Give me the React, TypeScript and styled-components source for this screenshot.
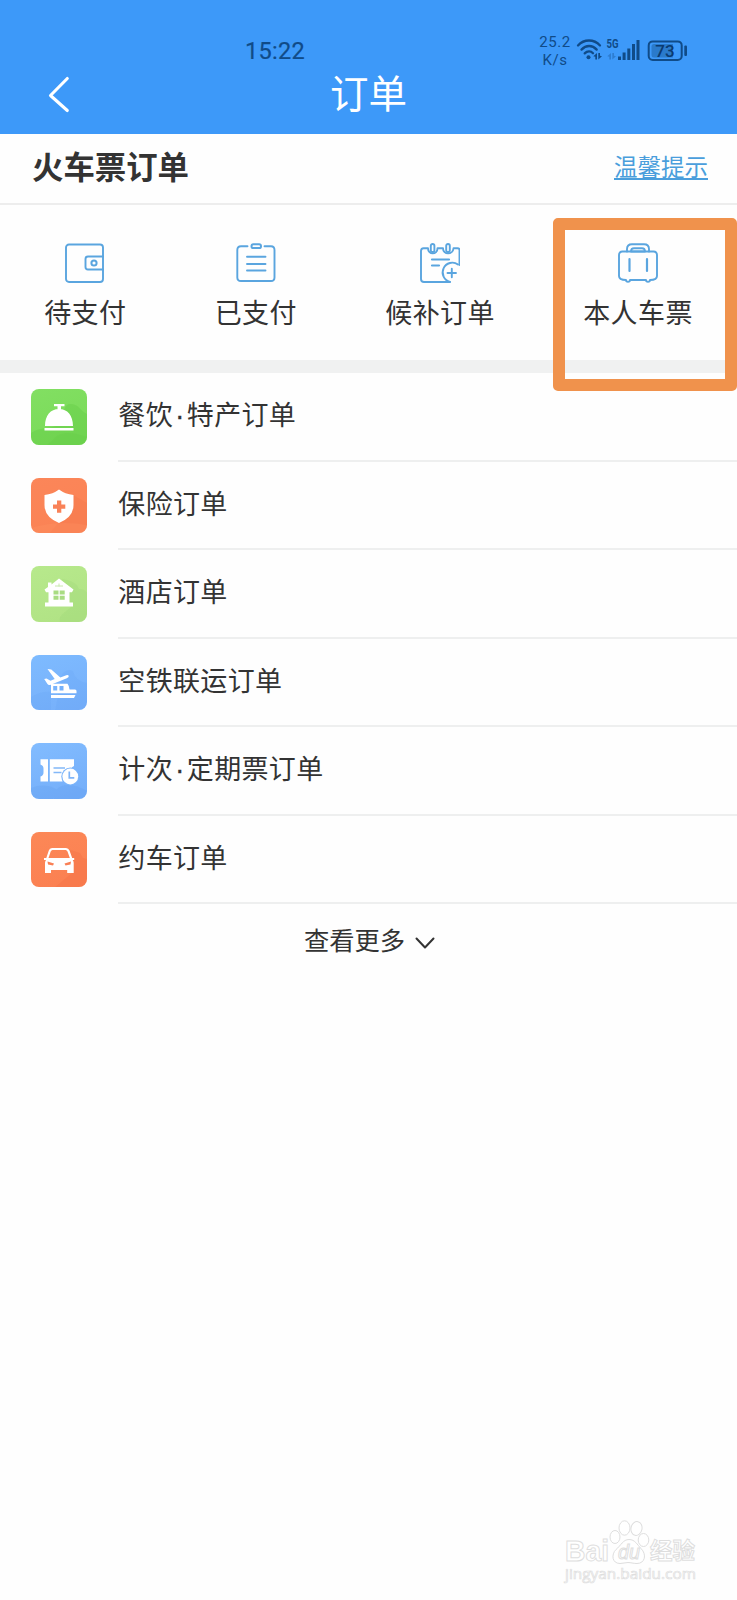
import React from "react";
import styled, { createGlobalStyle } from "styled-components";

const INK = "#104b88";
const LINE = "#5aa5df";

const GlobalStyle = createGlobalStyle`
  * { box-sizing: border-box; }
  html, body { margin: 0; padding: 0; background: #fefefe; }
  body {
    font-family: "Noto Sans CJK SC", "Noto Sans", sans-serif;
    color: #333;
  }
  svg { display: block; }
`;

const Page = styled.div`
  position: relative;
  width: 737px;
  height: 1600px;
  overflow: hidden;
  display: flex;
  flex-direction: column;
  background: #fefefe;
`;

const Header = styled.header`
  height: 134px;
  flex: none;
  background: #3d99f9;
  display: flex;
  flex-direction: column;
`;

const StatusBar = styled.div`
  height: 66px;
  padding: 33px 48px 0 245px;
  display: flex;
  justify-content: space-between;
  color: ${INK};
  font-family: Roboto, sans-serif;
`;

const Clock = styled.span`
  font-size: 23.5px;
  line-height: 36px;
  letter-spacing: 0.3px;
  -webkit-text-stroke: 0.2px ${INK};
`;

const StatusGroup = styled.div`
  display: flex;
  height: 34px;
`;

const Speed = styled.div`
  width: 35px;
  padding-right: 1px;
  text-align: center;
  font-size: 15px;
  line-height: 18px;
  letter-spacing: 0.6px;
`;

const NavBar = styled.div`
  flex: 1;
  display: grid;
  grid-template-columns: 110px 1fr 110px;
`;

const BackButton = styled.button`
  border: 0;
  background: none;
  padding: 9px 0 0 47px;
  display: flex;
`;

const PageTitle = styled.h1`
  margin: 0;
  text-align: center;
  color: #fff;
  font-size: 38.5px;
  line-height: 51px;
  font-weight: 400;
`;

const SectionBar = styled.div`
  height: 71px;
  flex: none;
  border-bottom: 2px solid #ededed;
  padding: 0 29px 4px 32px;
  display: flex;
  align-items: center;
  justify-content: space-between;
`;

const SectionTitle = styled.h2`
  margin: 0 0 1px;
  font-size: 31.4px;
  line-height: 40px;
  font-weight: 700;
`;

const TipLink = styled.a`
  color: #4a9edc;
  font-size: 23.5px;
  line-height: 30px;
  border-bottom: 2px solid #4a9edc;
  height: 26px;
  display: flex;
  align-items: center;
`;

const Tabs = styled.nav`
  height: 155px;
  flex: none;
  display: flex;
  justify-content: space-around;
  padding-top: 38px;
`;

const Tab = styled.div`
  display: flex;
  flex-direction: column;
  align-items: center;
  gap: 9px;
`;

const TabLabel = styled.span`
  font-size: 27px;
  line-height: 40px;
  letter-spacing: 0.4px;
`;

const Band = styled.div`
  height: 13px;
  flex: none;
  background: #f0f1f1;
`;

const List = styled.ul`
  list-style: none;
  margin: 0;
  padding: 0 0 0 31px;
`;

const Row = styled.li`
  height: 88.5px;
  display: flex;
  gap: 31px;
`;

const Tile = styled.div<{ $from: string; $to: string }>`
  width: 55.5px;
  height: 55.5px;
  margin-top: 16px;
  border-radius: 8px;
  overflow: hidden;
  background: linear-gradient(160deg, ${(p) => p.$from}, ${(p) => p.$to});
`;

const RowBody = styled.div`
  flex: 1;
  border-bottom: 2px solid #eeefef;
  padding: 21px 0 0 0.8px;
  font-size: 27px;
  line-height: 40px;
  letter-spacing: 0.35px;
`;

const Dot = styled.span`
  display: inline-block;
  width: 13.8px;
  text-align: center;
  font-family: "Liberation Sans", sans-serif;
  line-height: 30px;
  -webkit-text-stroke: 0.4px #333;
`;

const More = styled.button`
  border: 0;
  background: none;
  color: inherit;
  font: inherit;
  padding: 0 0 0 2px;
  margin: 17px 0 0;
  display: flex;
  justify-content: center;
  gap: 10px;
  font-size: 25.3px;
  line-height: 36px;
`;

const MoreIcon = styled.svg`
  margin-top: 15px;
`;

const Highlight = styled.div`
  position: absolute;
  left: 553px;
  top: 218px;
  width: 184px;
  height: 173px;
  border: 12px solid #f0924c;
  border-radius: 5px;
`;

const Watermark = styled.svg`
  position: absolute;
  right: 34px;
  bottom: 13px;
`;

const StatusIcons = () => (
  <svg width="116" height="34" viewBox="0 0 116 34" fill="none">
    <g stroke={INK} strokeWidth="2.3" strokeLinecap="round">
      <path d="M5 12.5C11 5.8 21 5.8 27 12.5" />
      <path d="M8.5 16.6C13 11.8 19.3 11.8 23.7 16.6" />
      <path d="M11.7 20.4C14.3 17.8 17.7 17.8 20 20.2" />
    </g>
    <circle cx="15.5" cy="24.3" r="2" fill={INK} />
    <path d="M24 20v6.500h-1.700v-2.700l-2-.6zM25.300 26.500V20H27v2.700l2 .6z" fill={INK} />
    <text x="33.5" y="15.3" fontFamily="Roboto" fontWeight="700" fontSize="12.5" textLength="12" lengthAdjust="spacingAndGlyphs" fill={INK}>5G</text>
    <path d="M38 20v6.500h-1.700v-2.700l-2-.6zM39.300 26.500V20H41v2.700l2 .6z" fill={INK} opacity=".35" />
    <path d="M45 23.5h3v3.5h-3zM49.6 19.5h3v7.5h-3zM54.3 15.5h3v11.5h-3zM59 11h3v16h-3zM63.5 7h3v20h-3z" fill={INK} />
    <rect x="75.7" y="8.4" width="33" height="18.6" rx="4" stroke={INK} strokeWidth="2" />
    <path d="M81 11h19v13.5H81q-2.5 0-2.5-2.5v-8.500Q78.500 11 81 11z" fill={INK} opacity=".4" />
    <rect x="111.300" y="12.500" width="2.700" height="10.500" rx="1" fill={INK} />
    <text x="92" y="23.500" textAnchor="middle" fontFamily="Roboto" fontWeight="500" fontSize="17" fill="#0b3a70">73</text>
  </svg>
);

const lineIcon = { width: 40, height: 40, viewBox: "0 0 40 40", fill: "none", stroke: LINE, strokeWidth: 1.9, strokeLinecap: "round", strokeLinejoin: "round" } as const;

const WalletIcon = () => (
  <svg {...lineIcon}>
    <rect x="1" y="1.500" width="37" height="37.500" rx="3" />
    <path d="M38 13.500H23q-2.500 0-2.500 2.500v8q0 2.500 2.500 2.500h15" />
    <circle cx="29" cy="20" r="2.600" strokeWidth="2" />
  </svg>
);

const ClipboardIcon = () => (
  <svg {...lineIcon}>
    <path d="M11.500 3.200H5Q1.300 3.200 1.300 7v27.500Q1.300 38 5 38h30q3.500 0 3.500-3.500V7q0-3.800-3.500-3.800h-6.500" />
    <rect x="15.500" y="1.300" width="9.500" height="3.800" rx="1.900" strokeWidth="2" />
    <path d="M11 13.800h18.500M11 21h18.500M11 27.500h18.500" />
  </svg>
);

const CalendarIcon = () => (
  <svg {...lineIcon}>
    <path d="M39.500 22V7q0-1.800-2-1.800h-4C33 12 23 12 23 5.200h-5.500C17.500 12 8 12 8 5.200H3.500Q1 5.200 1 8v28q0 3 3 3h26" />
    <rect x="10.800" y="1" width="3.600" height="8" rx="1.800" />
    <rect x="26.200" y="1" width="3.600" height="8" rx="1.800" />
    <path d="M12 16.500h17M12 22.500h7" strokeWidth="2.200" />
    <path d="M38 21.500a9.700 9.700 0 1 0-8 17.300M27.500 30h8.500M31.800 25.800v8.500" />
  </svg>
);

const SuitcaseIcon = () => (
  <svg {...lineIcon}>
    <path d="M9 8.500V6q0-4.800 5-4.800h12q5 0 5 4.800v2.500M13 8.500q0-3.300 3-3.300h8q3 0 3 3.300z" />
    <path d="M12 37h16M28 37q0 1.800 2 1.800t2-1.800q7 0 7-4V12q0-3.500-3.500-3.500h-31Q1 8.500 1 12v21q0 4 7 4 0 1.800 2 1.800t2-1.800" />
    <path d="M11.500 16v12M29 16v12" strokeWidth="2.200" />
  </svg>
);

const TabIcons = [WalletIcon, ClipboardIcon, CalendarIcon, SuitcaseIcon];
const tabLabels = ["待支付", "已支付", "候补订单", "本人车票"];

const tile = { width: 56, height: 56, viewBox: "0 0 56 56", fill: "#fff" };

const BellArt = () => (
  <svg {...tile}>
    <path d="M0 44c12-8 24-2 31-12 3-5 0-16 8-17 9 0 9 6 17 10v31H0z" fill="#5fc942" opacity=".35" />
    <path d="M21 52c6-9 16-9 25-7l10 3v8H16z" fill="#5fc942" opacity=".2" />
    <path d="M23 15h10.500v2.200H30v3.500h-3.500v-3.500H23zM14 37c0-10.500 5.500-17 14-17s14 6.500 14 17zM13.500 39h29v2.500h-29z" />
  </svg>
);

const ShieldArt = () => (
  <svg {...tile}>
    <path d="M42 17l14 8v31H18l11-13z" fill="#f06d43" opacity=".2" />
    <path d="M0 50q27-8 56-3v9H0z" fill="#ff9669" opacity=".25" />
    <path d="M28 11.500Q34 16 42.500 17V27Q42.500 39 28 45 13.500 39 13.500 27V17Q22 16 28 11.500z" />
    <path d="M26 22.500h4.300v4h4v4.200h-4v4.100H26v-4.100h-4v-4.200h4z" fill="#f98258" />
  </svg>
);

const HotelArt = () => (
  <svg {...tile}>
    <path d="M31 13c8 1 15 4 17 10q6 0 8 4v29H29c-2-7 5-9 12-16z" fill="#98d475" opacity=".25" />
    <path d="M28 12.500l14.500 11-1.500 2.700h-2.500V36.500H42v4H14v-4h3.500V26.200H15l-1.500-2.700L17 21v-4.500h3.500v2z" />
    <path d="M22.500 24.500h5v4h-5zM28.700 24.500h5v4h-5zM22.500 29.700h5v4h-5zM28.700 29.700h5v4h-5z" fill="#a9dc83" />
    <path d="M24 20h8M28 17.500v3" stroke="#c8e8ad" strokeWidth="1" />
  </svg>
);

const PlaneTrainArt = () => (
  <svg {...tile}>
    <path d="M0 42q10-6 20-5v19H0zM31 19q6-6 11-3 2 10 14 12v28H24z" fill="#5f9df0" opacity=".16" />
    <path d="M16.500 14l3.800.5 9 8 6-2.300q2-.4 2.500.7 0 1.500-2 2.300l-16 6.500q-2.500.7-3.500-1L13.200 24l2.300-.6 4 2.400 4.200-1.700z" />
    <path fillRule="evenodd" d="M20 28.700h16.500q2 2.500 2 5.800H44q1.500 0 1.500 1.500v2.300H20zM22.200 31v4.500h4V31zM28.500 31v4.500h4V31z" />
    <path d="M20 40h24.500l-1.500 3H20z" />
  </svg>
);

const TicketArt = () => (
  <svg {...tile}>
    <path d="M0 45q15-6 28 3l-6 8H0zM23 56q0-14 14-14 10 0 19 6v8z" fill="#4f8fe9" opacity=".16" />
    <path d="M9.500 16.300H17v22.200H9.500v-5q3-1 3-4v-4q0-3-3-4z" />
    <path d="M18.800 16.300H43V23q-2.500 1-3 3-7 1-8.500 7v5.500H18.800z" />
    <path d="M22.500 25h11.500M22.500 29.500h8" stroke="#83b8f8" strokeWidth="1.700" />
    <circle cx="39.300" cy="33.500" r="9" fill="#7ab4fb" />
    <circle cx="39.300" cy="33.500" r="7.900" />
    <path d="M38.300 28.500v6.300h5" fill="none" stroke="#80b5f8" strokeWidth="1.700" />
  </svg>
);

const CarArt = () => (
  <svg {...tile}>
    <path d="M37 17l12 4 3 5 4 1v29H23l18-15z" fill="#ee633d" opacity=".22" />
    <path fillRule="evenodd" d="M21 16h14q2.500.2 3.500 2.500l2.700 7.500h2v2h-1.500q1 1.300 1 3v10h-6.500v-3H20v3h-6V31q0-1.700 1-3h-2v-2h2.300l2.500-7.500Q18.500 16.200 21 16zM21.500 18q-1.200.2-1.800 1.500L17.500 26h21.300l-2.300-6.500q-.7-1.300-1.800-1.500z" />
    <path d="M16.500 29.500l6.500 2-1 2-5-1zM40 29.500l-6.500 2 1 2 5-1z" fill="#f98055" />
  </svg>
);

const rows = [
  { parts: ["餐饮", "特产订单"], from: "#82df62", to: "#78da57", Art: BellArt },
  { parts: ["保险订单"], from: "#fb8659", to: "#fb8254", Art: ShieldArt },
  { parts: ["酒店订单"], from: "#b7e98c", to: "#b0e284", Art: HotelArt },
  { parts: ["空铁联运订单"], from: "#7ebbff", to: "#76affa", Art: PlaneTrainArt },
  { parts: ["计次", "定期票订单"], from: "#82bcff", to: "#73adf9", Art: TicketArt },
  { parts: ["约车订单"], from: "#fc8857", to: "#fb7f51", Art: CarArt },
];

export default function App() {
  return (
    <Page>
      <GlobalStyle />
      <Header>
        <StatusBar>
          <Clock>15:22</Clock>
          <StatusGroup>
            <Speed>
              25.2
              <br />
              K/s
            </Speed>
            <StatusIcons />
          </StatusGroup>
        </StatusBar>
        <NavBar>
          <BackButton aria-label="返回">
            <svg width="24" height="40" viewBox="0 0 24 40" fill="none" stroke="#fff" strokeWidth="3.100" strokeLinecap="round" strokeLinejoin="round">
              <path d="M20.300 3.500L3.500 20.500l16.800 15" />
            </svg>
          </BackButton>
          <PageTitle>订单</PageTitle>
        </NavBar>
      </Header>

      <SectionBar>
        <SectionTitle>火车票订单</SectionTitle>
        <TipLink>温馨提示</TipLink>
      </SectionBar>

      <Tabs>
        {tabLabels.map((label, i) => {
          const Icon = TabIcons[i];
          return (
            <Tab key={label}>
              <Icon />
              <TabLabel>{label}</TabLabel>
            </Tab>
          );
        })}
      </Tabs>
      <Band />

      <List>
        {rows.map(({ parts, from, to, Art }) => (
          <Row key={parts[0]}>
            <Tile $from={from} $to={to}>
              <Art />
            </Tile>
            <RowBody>
              {parts[0]}
              {parts[1] && <Dot>·</Dot>}
              {parts[1]}
            </RowBody>
          </Row>
        ))}
      </List>

      <More>
        查看更多
        <MoreIcon width="20" height="14" viewBox="0 0 20 14" fill="none" stroke="#333" strokeWidth="2" strokeLinecap="round" strokeLinejoin="round">
          <path d="M1.500 2.500L10 11.500 18.500 2.500" />
        </MoreIcon>
      </More>

      <Highlight />

      <Watermark width="140" height="68" viewBox="0 0 140 68" fill="#fff" stroke="#dedede" strokeWidth="1">
        <text x="2" y="42" fontFamily="Liberation Sans" fontWeight="700" fontSize="29" textLength="44" lengthAdjust="spacingAndGlyphs">Bai</text>
        <ellipse cx="52" cy="18" rx="5" ry="6.500" />
        <ellipse cx="61.500" cy="9" rx="5.500" ry="7.200" />
        <ellipse cx="73.500" cy="9.500" rx="5.500" ry="7" transform="rotate(12 73.500 9.500)" />
        <ellipse cx="80.500" cy="21" rx="5.300" ry="6.500" />
        <path d="M66 20.500c6 0 8 5 12 9 6 6 4 15-4 15-4 0-6-1-9-1s-5 1-8 1c-8 0-9-9-4-14 5-4 7-10 13-10z" />
        <text x="55" y="40" fontFamily="Liberation Sans" fontStyle="italic" fontSize="20" textLength="22" lengthAdjust="spacingAndGlyphs">du</text>
        <text x="87" y="40" fontFamily="Noto Sans CJK SC" fontWeight="700" fontSize="23" textLength="45" lengthAdjust="spacingAndGlyphs">经验</text>
        <text x="2" y="60" fontFamily="Open Sans" fontSize="14.500" textLength="131" lengthAdjust="spacingAndGlyphs" fill="#fefefe" strokeWidth=".7">jingyan.baidu.com</text>
      </Watermark>
    </Page>
  );
}
